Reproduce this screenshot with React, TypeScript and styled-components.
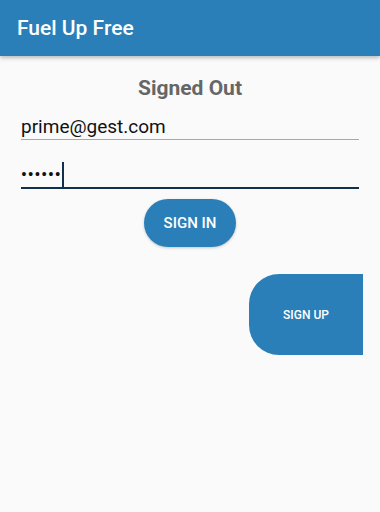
import styled, { createGlobalStyle } from 'styled-components';

const GlobalStyle = createGlobalStyle`
    body {
        margin: 0;
        background: #fafafa;
        font-family: Roboto, 'Liberation Sans', sans-serif;
    }
`;

const Page = styled.div`
    width: 380px;
    height: 512px;
    background: #fafafa;
    display: flex;
    flex-direction: column;
`;

const Header = styled.header`
    height: 56px;
    background: #2a7fb9;
    box-shadow: 0 2px 4px rgba(0, 0, 0, 0.25);
    display: flex;
    align-items: center;
    padding-left: 17px;
    color: #fff;
    font-size: 21px;
    font-weight: 500;
    flex-shrink: 0;
`;

const Content = styled.main`
    display: flex;
    flex-direction: column;
    padding: 20px 21px 0 21px;
`;

const Title = styled.h2`
    margin: 0 0 13px;
    line-height: 24px;
    text-align: center;
    font-size: 21px;
    font-weight: 700;
    color: #666;
`;

const Field = styled.div<{ $focused?: boolean }>`
    box-sizing: border-box;
    height: 27px;
    display: flex;
    align-items: center;
    border-bottom: ${(p) => (p.$focused ? '2px solid #10304e' : '1px solid #a8a8a8')};
    margin-bottom: ${(p) => (p.$focused ? '10px' : '22px')};
    font-size: 19px;
    color: #111;
`;

const Dots = styled.span`
    font-size: 16px;
    letter-spacing: 1px;
    font-weight: 700;
`;

const Caret = styled.span`
    display: inline-block;
    width: 2px;
    height: 25px;
    background: #10304e;
`;

const SignIn = styled.button`
    align-self: center;
    width: 92px;
    height: 48px;
    border: none;
    border-radius: 24px;
    background: #2a7fb9;
    color: #fff;
    font-family: Roboto, 'Liberation Sans', sans-serif;
    font-size: 15px;
    font-weight: 500;
    box-shadow: 0 1px 3px rgba(0, 0, 0, 0.2);
`;

const SignUp = styled.button`
    align-self: flex-end;
    margin-top: 27px;
    margin-right: -4px;
    width: 114px;
    height: 81px;
    border: none;
    border-radius: 30px 0 0 30px;
    background: #2a7fb9;
    color: #fff;
    font-family: Roboto, 'Liberation Sans', sans-serif;
    font-size: 12px;
    font-weight: 500;
`;

const App = () => {
    return (
        <>
            <GlobalStyle />
            <Page>
                <Header>Fuel Up Free</Header>
                <Content>
                    <Title>Signed Out</Title>
                    <Field>prime@gest.com</Field>
                    <Field $focused>
                        <Dots>••••••</Dots>
                        <Caret />
                    </Field>
                    <SignIn>SIGN IN</SignIn>
                    <SignUp>SIGN UP</SignUp>
                </Content>
            </Page>
        </>
    );
};

export default App;
